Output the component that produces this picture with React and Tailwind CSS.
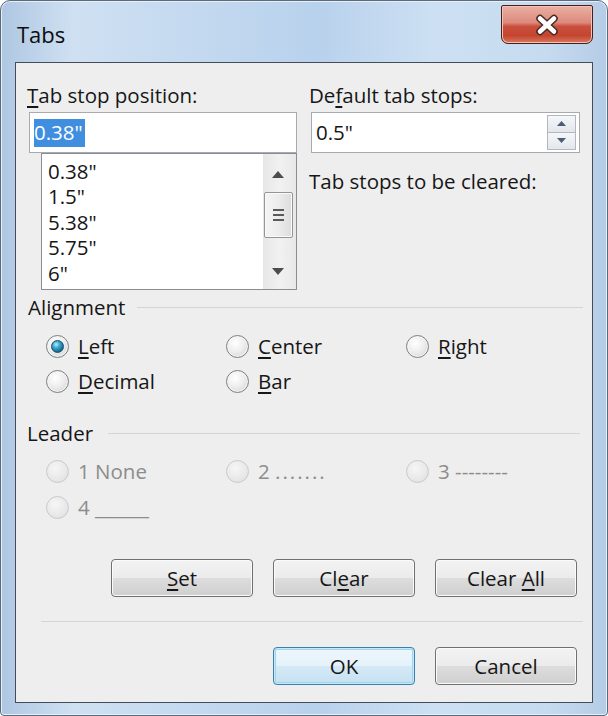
import React from "react";

const U = ({ children }) => (
  <span className="underline underline-offset-[3px] decoration-[1.5px]">{children}</span>
);

function Radio({ checked, disabled }) {
  if (disabled) {
    return (
      <span className="w-[23px] h-[23px] rounded-full border border-[#c9c9c9] bg-[radial-gradient(circle_at_40%_35%,#f6f6f6_0%,#e9e9e9_55%,#dddddd_100%)] shrink-0" />
    );
  }
  return (
    <span className="w-[23px] h-[23px] rounded-full border border-[#7f7f7f] bg-[radial-gradient(circle_at_40%_35%,#ffffff_0%,#eeeeee_45%,#cdcdcd_100%)] flex items-center justify-center shrink-0 shadow-[inset_0_0_0_1px_#f7f7f7]">
      {checked && (
        <span className="w-[13px] h-[13px] rounded-full border border-[#1a4d66] bg-[radial-gradient(circle_at_38%_32%,#b4ecff_0%,#3aa6cf_35%,#126690_75%,#0c4462_100%)]" />
      )}
    </span>
  );
}

function Opt({ checked, disabled, children }) {
  return (
    <div className="flex items-center gap-[9px]">
      <Radio checked={checked} disabled={disabled} />
      <span className={disabled ? "text-[#8c8c8c]" : "text-[#161616]"}>{children}</span>
    </div>
  );
}

function Btn({ children, focused }) {
  return (
    <div
      className={
        "w-[142px] h-[38px] rounded-[4px] border flex items-center justify-center text-[#161616] " +
        (focused
          ? "border-[#3b7fae] bg-[linear-gradient(180deg,#eef7fc_0%,#e5f2fa_50%,#d4e9f6_50%,#c6e1f2_100%)] shadow-[inset_0_0_0_1px_#c6eaf9,inset_0_0_0_2px_#9fd6ef]"
          : "border-[#707070] bg-[linear-gradient(180deg,#f3f3f3_0%,#ebebeb_50%,#dddddd_50%,#cfcfcf_100%)] shadow-[inset_0_0_0_1px_#fbfbfb]")
      }
    >
      {children}
    </div>
  );
}

function Tri({ up, color = "#555" }) {
  return (
    <svg width="12" height="7" viewBox="0 0 12 7">
      {up ? (
        <path d="M0 7 L6 0 L12 7 Z" fill={color} />
      ) : (
        <path d="M0 0 L12 0 L6 7 Z" fill={color} />
      )}
    </svg>
  );
}

function SmallTri({ up }) {
  return (
    <svg width="9" height="5" viewBox="0 0 9 5">
      {up ? <path d="M0 5 L4.5 0 L9 5 Z" fill="#4b5b78" /> : <path d="M0 0 L9 0 L4.5 5 Z" fill="#4b5b78" />}
    </svg>
  );
}

export default function App() {
  const items = ['0.38"', '1.5"', '5.38"', '5.75"', '6"'];
  return (
    <div className="w-[608px] h-[716px] bg-white font-['Open_Sans',sans-serif] text-[20.5px] leading-none select-none">
      <div className="w-[608px] h-[716px] rounded-t-[10px] rounded-b-[4px] border border-[#5d6a7a] bg-[linear-gradient(90deg,#aec7e2_0%,#cfe0f2_12%,#c2d8ef_35%,#b8d1ec_52%,#cde0f3_72%,#c6dbf0_90%,#b5cce6_100%)] flex flex-col px-[14px] pb-[12px] shadow-[inset_0_0_0_1px_#e6f0fa]">
        {/* Title bar */}
        <div className="h-[61px] flex items-start justify-between shrink-0">
          <div className="pl-[2px] h-[61px] flex items-center text-[22px] text-[#0d0d0d] pt-[4px]">Tabs</div>
          <div className="mt-[4px] w-[92px] h-[39px] rounded-b-[7px] rounded-t-[2px] border border-[#4a1d18] bg-[linear-gradient(180deg,#eab0a4_0%,#dc8a7b_45%,#c9503d_55%,#c54530_80%,#d77a5f_100%)] shadow-[inset_0_0_0_1px_#f2c4b9] flex items-center justify-center">
            <svg width="28" height="22" viewBox="0 0 28 22">
              <path d="M7 4.5 L21 17.5 M21 4.5 L7 17.5" stroke="#4a2a26" strokeWidth="7.5" strokeLinecap="round" />
              <path d="M7 4.5 L21 17.5 M21 4.5 L7 17.5" stroke="#ffffff" strokeWidth="4.5" strokeLinecap="round" />
            </svg>
          </div>
        </div>

        {/* Client */}
        <div className="flex-1 border border-[#434d59] bg-[#eeeeee] flex flex-col pt-[17px]">
          <div className="flex pl-[13px]">
            {/* Left column */}
            <div className="w-[268px] flex flex-col">
              <div className="h-[30px] flex items-center -ml-[2px] text-[#161616]">
                <span><U>T</U>ab stop position:</span>
              </div>
              <div className="mt-[2px] h-[41px] border border-[#a7abb0] bg-white flex items-center pl-[4px]">
                <span className="bg-[#3f8ee0] text-white h-[28px] flex items-center pr-[2px]">0.38"</span>
              </div>
              <div className="ml-[12px] h-[137px] border border-[#8a8e94] bg-white flex">
                <div className="flex-1 pl-[6px] pt-[4px] flex flex-col text-[#161616]">
                  {items.map((t) => (
                    <div key={t} className="h-[25.5px] flex items-center">{t}</div>
                  ))}
                </div>
                <div className="w-[33px] bg-[linear-gradient(90deg,#e6e6e6_0%,#f1f1f1_50%,#e8e8e8_100%)] flex flex-col items-center pr-[3px] pt-[2px]">
                  <div className="h-[36px] flex items-center justify-center">
                    <Tri up color="#4d4d4d" />
                  </div>
                  <div className="w-[29px] h-[46px] rounded-[2px] border border-[#959595] bg-[linear-gradient(90deg,#f4f4f4_0%,#ececec_50%,#dcdcdc_100%)] shadow-[inset_0_0_0_1px_#fafafa] flex flex-col items-center justify-center gap-[3px]">
                    <span className="w-[11px] h-[2px] bg-[#5a5a5a]" />
                    <span className="w-[11px] h-[2px] bg-[#5a5a5a]" />
                    <span className="w-[11px] h-[2px] bg-[#5a5a5a]" />
                  </div>
                  <div className="flex-1 flex items-end justify-center pb-[14px]">
                    <Tri color="#4d4d4d" />
                  </div>
                </div>
              </div>
            </div>

            {/* Right column */}
            <div className="ml-[12px] flex flex-col">
              <div className="h-[30px] flex items-center text-[#161616]">
                <span>De<U>f</U>ault tab stops:</span>
              </div>
              <div className="ml-[2px] mt-[2px] w-[269px] h-[41px] border border-[#a7abb0] bg-white flex items-center pl-[4px] pr-[3px]">
                <span className="flex-1 text-[#161616]">0.5"</span>
                <div className="w-[29px] h-[35px] flex flex-col">
                  <div className="h-[17.5px] border border-[#b3b8bf] bg-[linear-gradient(180deg,#f5f7f9_0%,#e3e7ec_100%)] flex items-center justify-center">
                    <SmallTri up />
                  </div>
                  <div className="h-[17.5px] border border-t-0 border-[#b3b8bf] bg-[linear-gradient(180deg,#f5f7f9_0%,#e3e7ec_100%)] flex items-center justify-center">
                    <SmallTri />
                  </div>
                </div>
              </div>
              <div className="mt-[13px] h-[30px] flex items-center text-[#161616]">Tab stops to be cleared:</div>
            </div>
          </div>

          {/* Alignment */}
          <div className="mt-[2px] h-[30px] flex items-center pl-[12px] pr-[9px]">
            <span className="w-[109px] text-[#161616]">Alignment</span>
            <span className="flex-1 h-[1px] bg-[#d4d4d4]" />
          </div>
          <div className="mt-[7px] pl-[30px] grid grid-cols-[180px_180px_180px]">
            <div className="h-[35px] flex items-center"><Opt checked><U>L</U>eft</Opt></div>
            <div className="h-[35px] flex items-center"><Opt><U>C</U>enter</Opt></div>
            <div className="h-[35px] flex items-center"><Opt><U>R</U>ight</Opt></div>
            <div className="h-[35px] flex items-center"><Opt><U>D</U>ecimal</Opt></div>
            <div className="h-[35px] flex items-center"><Opt><U>B</U>ar</Opt></div>
          </div>

          {/* Leader */}
          <div className="mt-[19px] h-[30px] flex items-center pl-[11px] pr-[12px]">
            <span className="w-[81px] text-[#161616]">Leader</span>
            <span className="flex-1 h-[1px] bg-[#d4d4d4]" />
          </div>
          <div className="mt-[5px] pl-[30px] grid grid-cols-[180px_180px_180px]">
            <div className="h-[36px] flex items-center"><Opt disabled>1 None</Opt></div>
            <div className="h-[36px] flex items-center"><Opt disabled><span>2 <span className="tracking-[2px]">.......</span></span></Opt></div>
            <div className="h-[36px] flex items-center"><Opt disabled>3 --------</Opt></div>
            <div className="h-[36px] flex items-center"><Opt disabled>4 ______</Opt></div>
          </div>

          {/* Set / Clear buttons */}
          <div className="mt-[34px] flex justify-end gap-[20px] pr-[15px]">
            <Btn><span><U>S</U>et</span></Btn>
            <Btn><span>Cl<U>e</U>ar</span></Btn>
            <Btn><span>Clear <U>A</U>ll</span></Btn>
          </div>

          <div className="mt-[24px] ml-[25px] mr-[9px] h-[1px] bg-[#d6d6d6]" />

          <div className="mt-[25px] flex justify-end gap-[20px] pr-[15px]">
            <Btn focused>OK</Btn>
            <Btn>Cancel</Btn>
          </div>
        </div>
      </div>
    </div>
  );
}
